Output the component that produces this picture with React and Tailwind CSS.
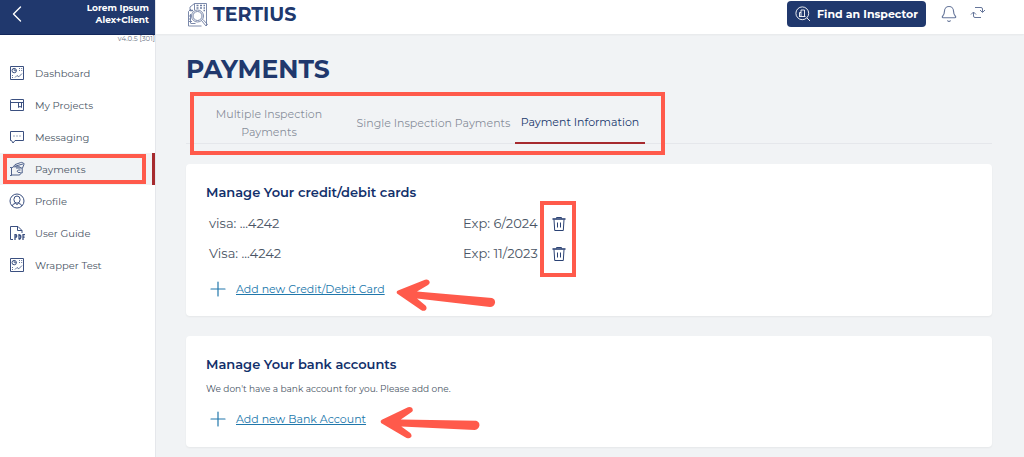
import { Bell, ChevronLeft, Plus } from 'lucide-react';

function DashboardIcon() {
  return (
    <svg viewBox="0 0 16 16" className="size-4 shrink-0" fill="none" stroke="currentColor" aria-hidden="true">
      <path d="M1.500 1.500h13v13h-13z" />
      <circle cx="5.200" cy="5.600" r="2.200" />
      <path d="M5.200 3.400v2.200h2.200M10 3.500h1M12.200 3.500h1M10 5.500h1M12.200 5.500h1M6 12.500l2-2 1.800 1.300 3.200-3.300M3 10.500h1M3 12.500h1" strokeWidth=".8" />
    </svg>
  );
}

function ProjectsIcon() {
  return (
    <svg viewBox="0 0 16 16" className="size-4 shrink-0" fill="none" stroke="currentColor" aria-hidden="true">
      <path d="M1.500 13.500v-10q0-1 1-1h12v11zM1.500 5.500h13M9.500 5.500v5l1.500-1.200 1.500 1.200v-5" />
    </svg>
  );
}

function MessagingIcon() {
  return (
    <svg viewBox="0 0 16 16" className="size-4 shrink-0" fill="none" stroke="currentColor" aria-hidden="true">
      <path d="M1.500 2.500h13v9H6L4 14l-1.500-2.500h-1z" />
      <path d="M4.500 7h1M7.500 7h1M10.500 7h1" />
    </svg>
  );
}

function PaymentsIcon() {
  return (
    <svg viewBox="0 0 16 16" className="size-4 shrink-0" fill="none" stroke="currentColor" strokeWidth=".9" aria-hidden="true">
      <path d="M4.500 5.500 6 3.600l5.500-2q1-.4 2 0l1 .5q.8.500.4 1.500L13.500 7M6 5.200l8.500-2.400" />
      <path d="M1 6.500h1.500v8H1M2.500 7l2-1.200h6q1 .2 1 1.200H7M2.500 14H10q1.500 0 1.500-1.500M11.500 7h1.700v5h-1.700M11.500 9H9.700L8 10.200l1.200 1.300h2.300" />
    </svg>
  );
}

function ProfileIcon() {
  return (
    <svg viewBox="0 0 16 16" className="size-4 shrink-0" fill="none" stroke="currentColor" aria-hidden="true">
      <circle cx="8" cy="8" r="7" />
      <ellipse cx="8" cy="6.600" rx="3.100" ry="3.600" />
      <path d="M3 13q.6-2 3.400-2.700L8 11.600l1.600-1.300Q12.400 11 13 13" />
    </svg>
  );
}

function GuideIcon() {
  return (
    <svg viewBox="0 0 16 16" className="size-4 shrink-0" fill="none" stroke="currentColor" aria-hidden="true">
      <path d="M4 14.500H1.500v-13h7.500l4 4V8M8.500 1.500v4H13" />
      <path d="M6 15V9.700h1.200q1.200 1.200 0 2.500H6M10 14.400V9.700q2.200.4 1.800 2.700-.3 1.600-1.800 2M14 15V9.700h2M14 12.200h1.700" strokeWidth="1.300" />
    </svg>
  );
}

function InspectorIcon() {
  return (
    <svg viewBox="0 0 16 16" className="size-4 shrink-0" fill="none" stroke="currentColor" strokeWidth=".9" aria-hidden="true">
      <circle cx="7.300" cy="7.300" r="6.400" />
      <path d="M12 12l3 3M4 10.500h6.500M6 10.500V4h3.500v6.500M6 6.500H4.500v4M7.800 6h.1M7.800 8.200h.1" />
    </svg>
  );
}

function SyncIcon() {
  return (
    <svg viewBox="0 0 16 14" className="h-3.5 w-4" fill="none" stroke="currentColor" aria-hidden="true">
      <path d="M5 1.500h6q1.500 0 1.500 1.500v3M10 4l2.500 2.500L15 4M11 11.500H5q-1.500 0-1.500-1.500V6M1 8.500l2.500-2.500L6 8.500" />
    </svg>
  );
}

function TrashIcon() {
  return (
    <svg viewBox="0 0 14 16" className="h-4 w-3.5" fill="none" stroke="currentColor" aria-hidden="true">
      <path d="M.5 3h13" strokeWidth="1.600" />
      <path d="M4.500 2.500v-1h5v1M2 3.500l.7 11h8.600l.7-11M5.500 6.500v5M8.500 6.500v5" />
    </svg>
  );
}

function LogoMark() {
  return (
    <svg viewBox="0 0 22 26" className="h-[26px] w-[22px] shrink-0 text-[#6d7da1]" fill="none" stroke="currentColor" strokeWidth=".9" aria-hidden="true">
      <path d="M7.500 8V1.500h12V24M7.500 1.500 3 5v4M1.500 24V9.500L4 7M1.500 24h13M3.500 21.500h5M3.500 12v9" />
      <path d="M9.500 3.500h2M13 3.500h2M16.500 3.500h1.500M9.500 6h2M13 6h2M16.500 6h1.500M16.500 8.500H18M3 8.500h3" strokeWidth="1.400" />
      <circle cx="10.500" cy="14" r="6" fill="#fff" />
      <circle cx="10.500" cy="14" r="4.500" />
      <path d="M14.500 18.500 19 24l1.500-1.500-4.500-5M2 14h2M2 17h2M2 19.500h3" />
    </svg>
  );
}

// Указатель-стрелка рядом со ссылкой
function Arrow({ className }) {
  return (
    <svg viewBox="0 0 102 32" className={`pointer-events-none absolute h-8 w-[102px] text-[#ff5a4b] ${className}`} aria-hidden="true">
      <path
        fill="currentColor"
        d="M2 14.500Q1 12.500 3 11.500L30 .8q3.500-.8 4.500 1.700.8 2.300-1.500 3.500l-11 6.500L97 19q3.500 1.300 3 5-1 4-5 4L22 19.500l8.500 7q2 2.500.3 4.500-2.300 1.700-4.800 0z"
      />
    </svg>
  );
}

const navItems = [
  { label: 'Dashboard', icon: DashboardIcon },
  { label: 'My Projects', icon: ProjectsIcon },
  { label: 'Messaging', icon: MessagingIcon },
  { label: 'Payments', icon: PaymentsIcon, active: true },
  { label: 'Profile', icon: ProfileIcon },
  { label: 'User Guide', icon: GuideIcon },
  { label: 'Wrapper Test', icon: DashboardIcon },
];

const cards = [
  { name: 'visa: ...4242', exp: 'Exp: 6/2024' },
  { name: 'Visa: ...4242', exp: 'Exp: 11/2023' },
];

function Sidebar() {
  return (
    <aside className="w-[156px] shrink-0 border-r border-gray-200 bg-white">
      <div className="flex h-[35px] items-start justify-between border-b border-[#12275a] bg-[#20386d] pr-1.5 pl-[3px] text-white">
        <button type="button" aria-label="Back">
          <ChevronLeft className="size-7" strokeWidth={1.2} />
        </button>
        <p className="pt-0.5 text-right text-[9px] leading-3 font-bold">
          Lorem Ipsum<br />
          Alex+Client
        </p>
      </div>
      <p className="h-[22px] text-right text-[7px] leading-2 text-gray-500">v4.0.5 [301]</p>

      <nav>
        {navItems.map(({ label, icon: Icon, active }) => (
          <a
            key={label}
            href="#"
            className={`relative flex h-8 items-center gap-2.5 pl-[9px] text-[10px] text-gray-600 ${active ? 'border-r-3 border-[#a62a2e] bg-[#f1f3f5]' : ''}`}
          >
            <span className="text-[#3b5080]"><Icon /></span>
            {label}
            {active && <span className="pointer-events-none absolute inset-y-px right-1.5 left-[3px] border-4 border-[#ff5a4b]" />}
          </a>
        ))}
      </nav>
    </aside>
  );
}

function Header() {
  return (
    <header className="flex h-[34px] items-start bg-white pr-[38px] pl-[31px] shadow-xs">
      <div className="flex items-center gap-1 pt-px text-[#20386d]">
        <LogoMark />
        <span className="text-[19px] leading-7 font-bold">TERTIUS</span>
      </div>
      <div className="ml-auto flex items-center text-[#66769a]">
        <button type="button" className="mt-px flex h-[26px] items-center gap-1.5 rounded-sm bg-[#20386d] px-2 text-[11px] font-bold text-white">
          <InspectorIcon />
          Find an Inspector
        </button>
        <button type="button" aria-label="Notifications" className="ml-3.5">
          <Bell className="size-[18px]" strokeWidth={1.5} />
        </button>
        <button type="button" aria-label="Refresh" className="ml-3 self-start pt-1.5">
          <SyncIcon />
        </button>
      </div>
    </header>
  );
}

function Tabs() {
  return (
    <div role="tablist" className="relative mt-3 flex h-[50px] border-b border-gray-200 text-[11px] leading-[18px] text-gray-500/80">
      <button type="button" role="tab" aria-selected="false" className="w-[166px] px-6 pt-2">Multiple Inspection Payments</button>
      <button type="button" role="tab" aria-selected="false" className="w-[163px] pt-2">Single Inspection Payments</button>
      <button type="button" role="tab" aria-selected="true" className="-mb-px w-[130px] border-b-2 border-[#a62a2e] pt-2 text-[#20386d]">Payment Information</button>
      <div className="pointer-events-none absolute -top-0.5 left-1 h-[63px] w-[475px] border-4 border-[#ff5a4b]" />
    </div>
  );
}

function AddLink({ children, arrowClass }) {
  return (
    <div className="relative flex items-center gap-1.5 text-[11px] leading-5 text-[#2077ab]">
      <Plus className="size-6" strokeWidth={1.2} />
      <a href="#" className="underline">{children}</a>
      <Arrow className={arrowClass} />
    </div>
  );
}

export default function App() {
  return (
    <div className="flex min-h-screen bg-[#f1f3f5] font-['Montserrat','Inter',sans-serif]">
      <Sidebar />
      <div className="min-w-0 flex-1">
        <Header />
        <main className="pr-8 pb-2.5 pl-[30px]">
          <h1 className="pt-[21px] text-[25px] leading-7 font-bold text-[#20386d]">PAYMENTS</h1>
          <div className="-mt-px"><Tabs /></div>

          <section className="mt-5 rounded-sm bg-white px-5 pt-[19px] pb-[15px] shadow-xs">
            <h2 className="text-[13px] leading-[18px] font-semibold text-[#12306b]">Manage Your credit/debit cards</h2>
            <ul className="relative mt-2 w-[370px] pl-[3px] text-[13px] text-gray-600">
              {cards.map((card) => (
                <li key={card.exp} className="flex h-[30px] items-center">
                  <span className="w-[254px]">{card.name}</span>
                  <span className="flex-1">{card.exp}</span>
                  <button type="button" aria-label={`Delete ${card.name}`} className="mr-2.5 text-[#2b4274]">
                    <TrashIcon />
                  </button>
                </li>
              ))}
              <li aria-hidden="true" className="pointer-events-none absolute -inset-y-2 right-0 w-9 border-4 border-[#ff5a4b]" />
            </ul>
            <div className="mt-2">
              <AddLink arrowClass="left-[189px] top-0.5">Add new Credit/Debit Card</AddLink>
            </div>
          </section>

          <section className="mt-5 rounded-sm bg-white px-5 pt-[19px] pb-4 shadow-xs">
            <h2 className="text-[13px] leading-[18px] font-semibold text-[#12306b]">Manage Your bank accounts</h2>
            <p className="mt-2 mb-2.5 text-[9px] leading-4 text-gray-600">We don't have a bank account for you. Please add one.</p>
            <AddLink arrowClass="left-[173px] -top-0.5 rotate-[-4deg]">Add new Bank Account</AddLink>
          </section>
        </main>
      </div>
    </div>
  );
}
